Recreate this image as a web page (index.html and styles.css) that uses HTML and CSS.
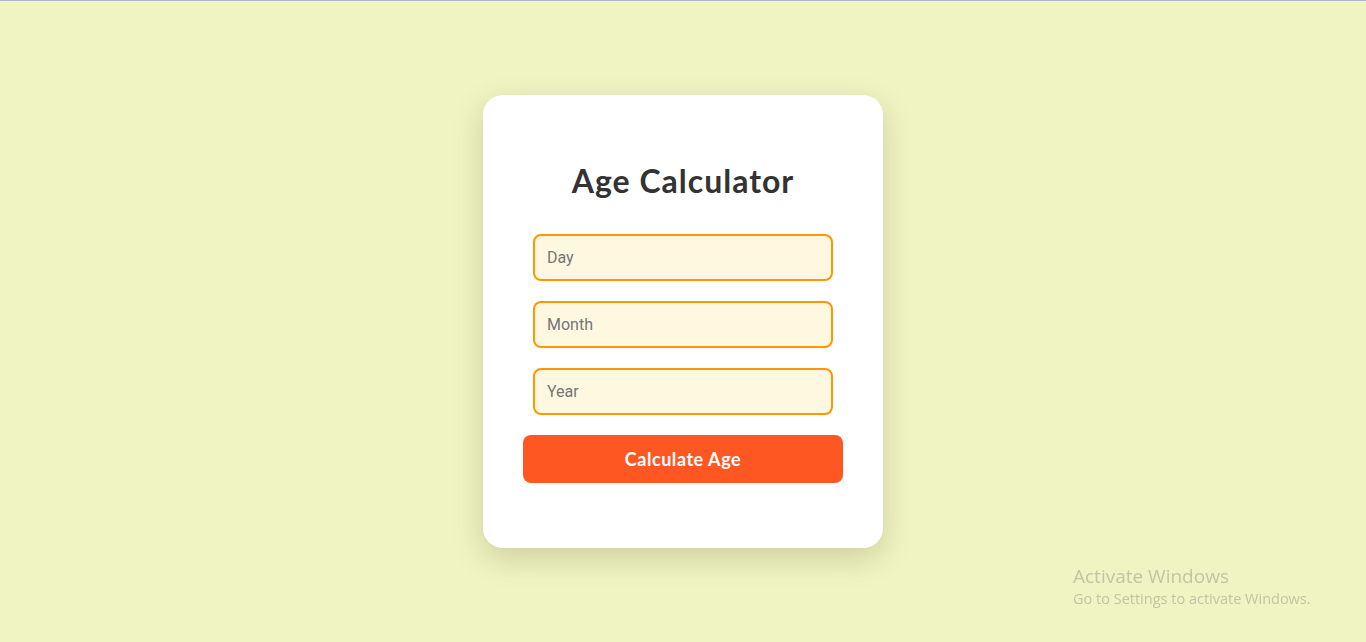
FILE: index.html
```html
<!DOCTYPE html>
<html lang="en">
<head>
<meta charset="utf-8">
<title>Age Calculator</title>
<link rel="stylesheet" href="styles.css">
</head>
<body>
  <main class="card">
    <h1 class="title">Age Calculator</h1>
    <div class="fields">
      <input class="field" type="number" placeholder="Day">
      <input class="field" type="number" placeholder="Month">
      <input class="field" type="number" placeholder="Year">
    </div>
    <button class="btn" type="button">Calculate Age</button>
    <p class="result"></p>
  </main>
  <div class="watermark">
    <div class="wm-title">Activate Windows</div>
    <div class="wm-sub">Go to Settings to activate Windows.</div>
  </div>
</body>
</html>
```
FILE: styles.css
```css
html {
  border-top: 1px solid #a9b4c8;
}
body {
  margin: 0;
  height: calc(100vh - 1px);
  background: #f0f4c3;
  display: flex;
  align-items: center;
  justify-content: center;
  font-family: "Lato", "Open Sans", sans-serif;
}
.card {
  width: 400px;
  box-sizing: border-box;
  background: #ffffff;
  border-radius: 20px;
  padding: 40px 40px 40px;
  box-shadow: 0 10px 30px rgba(80, 80, 20, 0.22);
  display: flex;
  flex-direction: column;
  align-items: center;
}
.title {
  margin: 24px 0 31px;
  font-size: 32px;
  line-height: 44px;
  font-weight: 700;
  color: #333333;
  letter-spacing: 1px;
}
.fields {
  display: flex;
  flex-direction: column;
  gap: 20px;
}
.field {
  width: 300px;
  box-sizing: border-box;
  padding: 12px;
  border: 2px solid #ff9800;
  border-radius: 8px;
  background: #fff8e1;
  font-family: "Roboto", sans-serif;
  font-size: 16px;
  line-height: 19px;
  height: 47px;
  color: #333;
  outline: none;
  -moz-appearance: textfield;
}
.field::-webkit-outer-spin-button,
.field::-webkit-inner-spin-button {
  -webkit-appearance: none;
  margin: 0;
}
.field::placeholder {
  color: #757575;
}
.btn {
  margin-top: 20px;
  width: 320px;
  height: 48px;
  border: none;
  border-radius: 8px;
  background: #ff5722;
  color: #ffffff;
  font-family: "Lato", "Open Sans", sans-serif;
  font-size: 18px;
  font-weight: 700;
  letter-spacing: 0.55px;
  cursor: pointer;
}
.result {
  margin: 25px 0 0;
  height: 0;
}
.watermark {
  position: fixed;
  left: 1073px;
  top: 565px;
  font-family: "Open Sans", "Noto Sans", sans-serif;
  color: #c2c4a3;
}
.wm-title {
  font-size: 19px;
  line-height: 23px;
}
.wm-sub {
  font-size: 14.5px;
  line-height: 20px;
  margin-top: 1px;
}
```
